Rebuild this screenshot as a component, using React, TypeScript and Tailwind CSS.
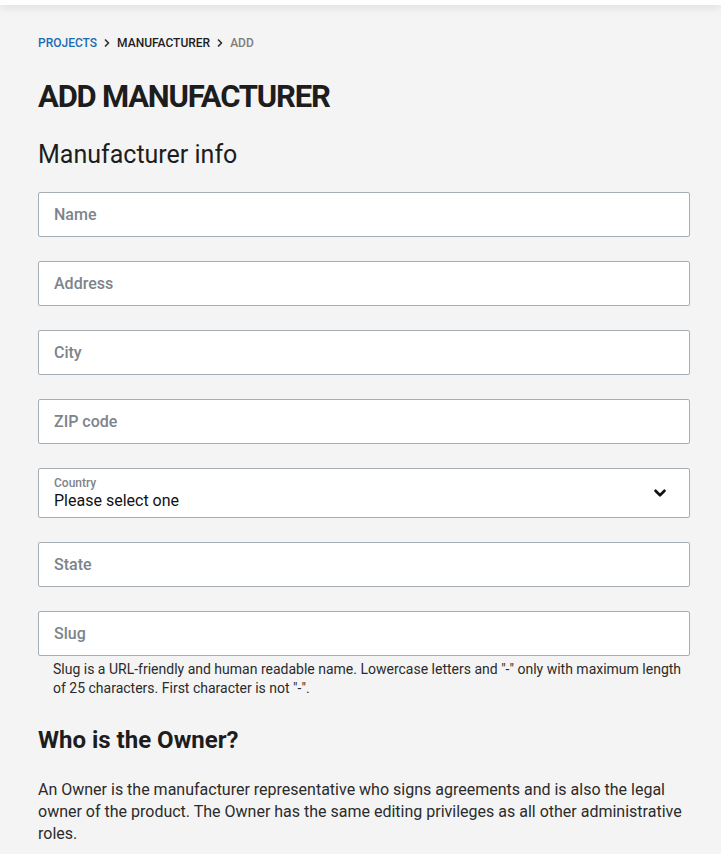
import { ChevronRight, ChevronDown } from "lucide-react";

const fields = ["Name", "Address", "City", "ZIP code"];

function TextField({ label }: { label: string }) {
  return (
    <input
      placeholder={label}
      className="block w-full h-[45px] bg-white border border-[#a5adb5] rounded-[2px] px-[15px] text-[16px] font-medium text-[#1d1d1d] placeholder:text-[#7d848b] outline-none"
    />
  );
}

export default function App() {
  return (
    <div className="min-h-[854px] bg-[#f4f4f4] font-['Roboto',sans-serif] text-[#1d1d1d]">
      {/* top bar */}
      <div className="h-[5px] bg-white shadow-[0_2px_8px_rgba(0,0,0,0.12)]" />

      <div className="pl-[38px] pr-[31px] pt-[31px]">
        {/* Breadcrumb */}
        <nav className="flex items-center text-[12px] font-medium leading-[14px]">
          <span className="text-[#1a6bb3]">PROJECTS</span>
          <ChevronRight size={12} strokeWidth={3.5} className="mx-[4px] text-[#333]" />
          <span className="text-[#1d1d1d]">MANUFACTURER</span>
          <ChevronRight size={12} strokeWidth={3.5} className="mx-[4px] text-[#333]" />
          <span className="text-[#7d7d7d]">ADD</span>
        </nav>

        <h1 className="mt-[28px] text-[31px] leading-[38px] font-bold tracking-[-1.2px] text-[#1d1d1d]">
          ADD MANUFACTURER
        </h1>
        <h2 className="mt-[23px] text-[25px] leading-[32px] font-normal">Manufacturer info</h2>

        <div className="mt-[21px] flex flex-col gap-[24px]">
          {fields.map((f) => (
            <TextField key={f} label={f} />
          ))}

          {/* Country select */}
          <div className="relative h-[50px] bg-white border border-[#a5adb5] rounded-[2px] px-[15px] pt-[7px]">
            <div className="text-[12px] leading-[14px] font-medium text-[#7d848b]">Country</div>
            <div className="text-[16px] leading-[20px] text-[#111] mt-[1px]">Please select one</div>
            <ChevronDown
              size={18}
              strokeWidth={3.5}
              className="absolute right-[20px] top-[15px] text-[#111]"
            />
          </div>

          <TextField label="State" />

          <div>
            <TextField label="Slug" />
            <p className="mt-[4px] pl-[15px] pr-[4px] text-[14px] leading-[19px] text-[#2b2b2b]">
              Slug is a URL-friendly and human readable name. Lowercase letters and "-" only with maximum length
              of 25 characters. First character is not "-".
            </p>
          </div>
        </div>

        <h3 className="mt-[27px] text-[24px] leading-[30px] font-bold">Who is the Owner?</h3>
        <p className="mt-[24px] text-[16px] leading-[22px] text-[#2b2b2b]">
          An Owner is the manufacturer representative who signs agreements and is also the legal owner of the
          product. The Owner has the same editing privileges as all other administrative roles.
        </p>
      </div>
    </div>
  );
}
